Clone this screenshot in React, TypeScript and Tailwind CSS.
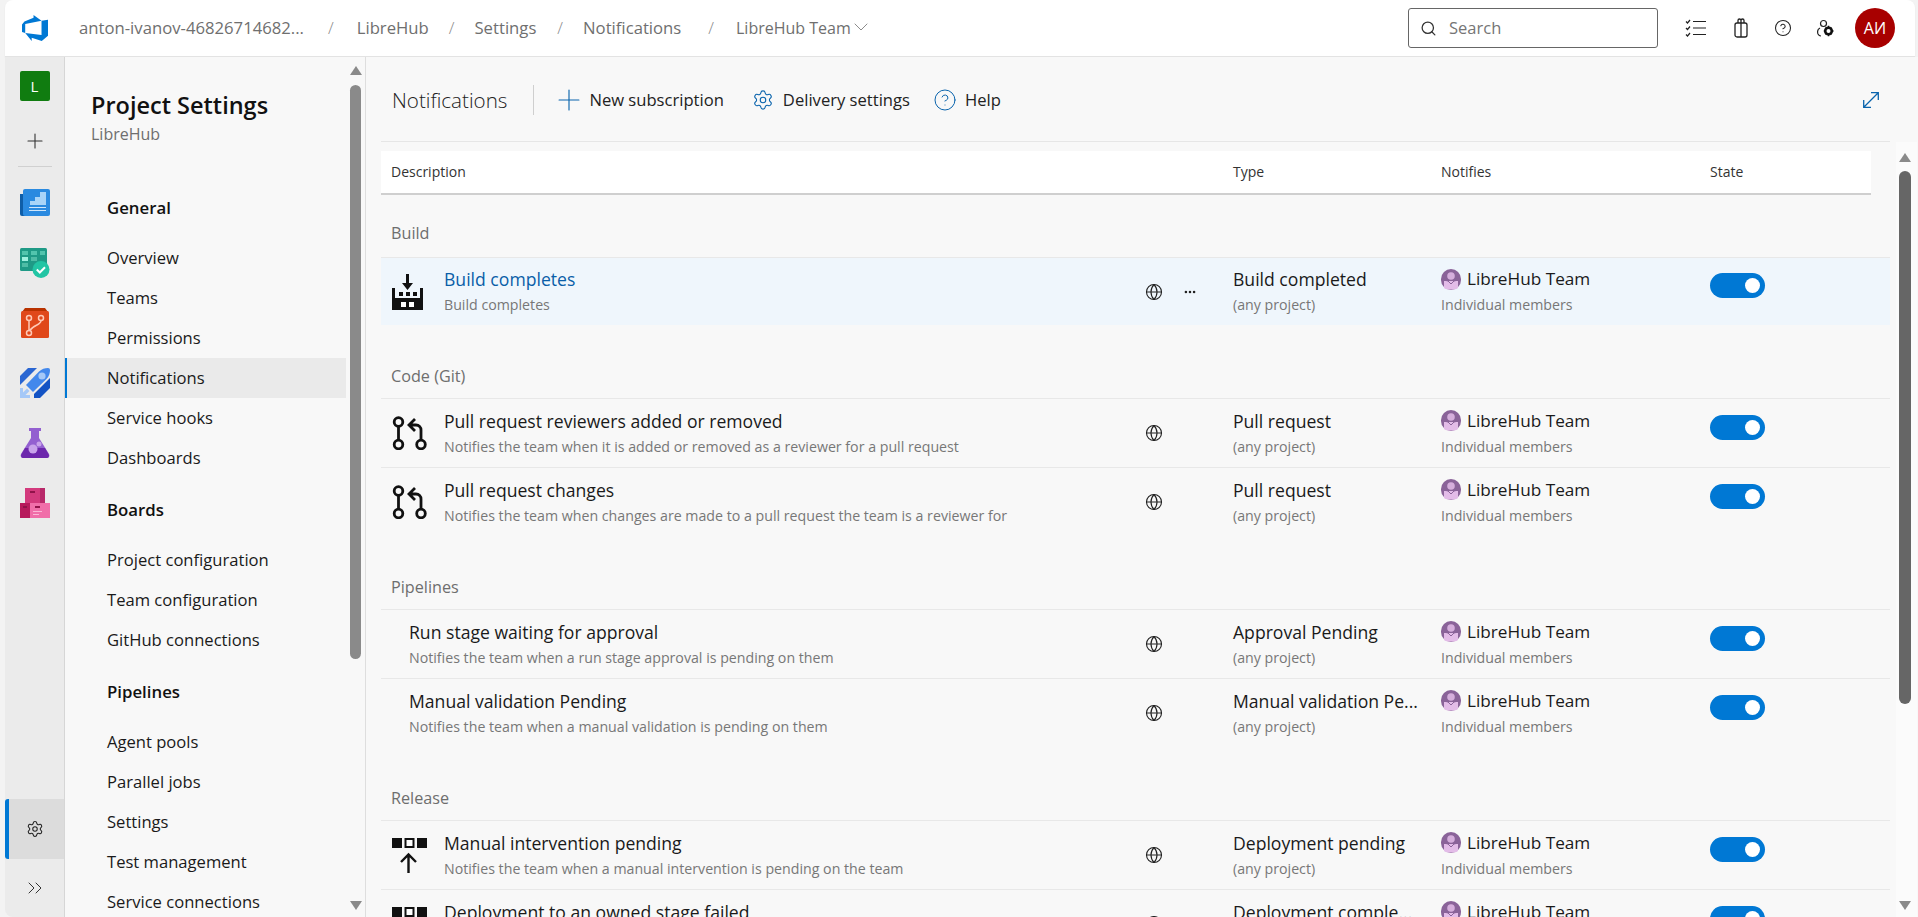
import { ChevronDown, ChevronsRight, CircleHelp, Ellipsis, Globe, Plus, Search, Settings } from "lucide-react";

const navSections = [
  { title: "General", items: ["Overview", "Teams", "Permissions", "Notifications", "Service hooks", "Dashboards"] },
  { title: "Boards", items: ["Project configuration", "Team configuration", "GitHub connections"] },
  { title: "Pipelines", items: ["Agent pools", "Parallel jobs", "Settings", "Test management", "Service connections"] },
];

type Row = { icon?: "build" | "pr" | "release"; title: string; sub: string; type: string; active?: boolean };

const groups: { label: string; rows: Row[] }[] = [
  {
    label: "Code (Git)",
    rows: [
      { icon: "pr", title: "Pull request reviewers added or removed", sub: "Notifies the team when it is added or removed as a reviewer for a pull request", type: "Pull request" },
      { icon: "pr", title: "Pull request changes", sub: "Notifies the team when changes are made to a pull request the team is a reviewer for", type: "Pull request" },
    ],
  },
  {
    label: "Pipelines",
    rows: [
      { title: "Run stage waiting for approval", sub: "Notifies the team when a run stage approval is pending on them", type: "Approval Pending" },
      { title: "Manual validation Pending", sub: "Notifies the team when a manual validation is pending on them", type: "Manual validation Pe..." },
    ],
  },
  {
    label: "Release",
    rows: [
      { icon: "release", title: "Manual intervention pending", sub: "Notifies the team when a manual intervention is pending on the team", type: "Deployment pending" },
      { icon: "release", title: "Deployment to an owned stage failed", sub: "Notifies the team when a deployment to an owned stage fails", type: "Deployment comple..." },
    ],
  },
];

const AzureLogo = () => (
  <svg width="26" height="26" viewBox="0 0 24 24" fill="#0078d4">
    <path d="M0 8.877L2.247 5.91l8.405-3.416V.022l7.37 5.393L2.966 8.338v8.225L0 15.707zm24-4.45v14.651l-5.753 4.9-9.303-3.057v3.056l-5.978-7.416 15.057 1.798V5.415z" />
  </svg>
);

const BoardsOverviewIcon = () => (
  <svg width="30" height="30" viewBox="0 0 30 30">
    <path d="M0 6h5v22H2a2 2 0 0 1-2-2z" fill="#0f5ea8" />
    <rect x="3" y="1" width="27" height="27" rx="2" fill="#2a8ae0" />
    <path d="M10 13h5V9h5V4h6v13H10z" fill="#a8d4f8" />
    <path d="M9 19h17v1H9zM9 22h17v1H9z" fill="#cfe6fb" />
  </svg>
);

const BoardsIcon = () => (
  <svg width="30" height="30" viewBox="0 0 30 30">
    <rect x="0" y="0" width="27" height="23" rx="1.500" fill="#1f9a86" />
    <path d="M2 3h6v4H2zM11 3h6v4h-6zM20 3h5v4h-5z" fill="#52c4ad" />
    <path d="M2 9h6v4H2z" fill="#9ff0df" />
    <path d="M11 9h6v4h-6zM2 15h6v4H2z" fill="#4fbca6" />
    <circle cx="21" cy="21.500" r="8.500" fill="#22c5a4" />
    <path d="M16.800 21.500l3 3 5.200-5.200" fill="none" stroke="#fff" strokeWidth="2" />
  </svg>
);

const ReposIcon = () => (
  <svg width="30" height="30" viewBox="0 0 30 30">
    <path d="M5 0h20l3 4H2z" fill="#b83200" />
    <rect x="1" y="3" width="28" height="27" rx="1.500" fill="#e0481a" />
    <g fill="none" stroke="#ffc9b5" strokeWidth="1.500">
      <circle cx="9" cy="10" r="2.500" />
      <circle cx="21" cy="10" r="2.500" />
      <circle cx="9" cy="25" r="2.500" />
      <path d="M9 12.500v10M21 12.500c0 5-8 4-11 10" />
    </g>
  </svg>
);

const PipelinesIcon = () => (
  <svg width="30" height="30" viewBox="0 0 30 30">
    <path d="M0 8L8 0h9L4 13l-4 4z" fill="#2a66d2" />
    <path d="M14 26L30 10v10L20 30h-6z" fill="#1353c4" />
    <path d="M6 17L19 3.500C21.500 1 25 0 28 0a2 2 0 0 1 2 2c0 3-1 6.500-3.500 9L13 24z" fill="#4388ec" />
    <circle cx="22" cy="8" r="3.600" fill="#a5c8f7" />
    <path d="M0 20h3v4.500l4-4 2.500 2.500-4 4H10v3H0z" fill="#a5c8f7" />
  </svg>
);

const TestIcon = () => (
  <svg width="30" height="30" viewBox="0 0 30 30">
    <path d="M9 0h12v3h-2v7l10 16c1 2 0 4-2 4H3c-2 0-3-2-2-4l10-16V3H9z" fill="#9360d0" />
    <path d="M5 20h20l4 7c0 2-1 3-2 3H3c-1 0-2-1-2-3z" fill="#6c27ac" />
    <circle cx="13" cy="21" r="4.500" fill="#c8a3ea" />
    <circle cx="19" cy="16" r="2.500" fill="#c8a3ea" />
  </svg>
);

const ArtifactsIcon = () => (
  <svg width="30" height="30" viewBox="0 0 30 30">
    <rect x="5" y="0" width="20" height="15" fill="#d33a7d" />
    <rect x="20" y="0" width="5" height="15" fill="#b8296a" />
    <rect x="0" y="15" width="15" height="15" fill="#b71a5c" />
    <rect x="10" y="15" width="20" height="15" fill="#f06ea9" />
    <path d="M10 3h5v2h-5zM15 18h5v2h-5zM3 18h4v2H3z" fill="#90134a" />
    <path d="M13 23h9v1h-9zM13 26h6v1h-6z" fill="#fbb7d6" />
  </svg>
);

const TeamAvatar = () => (
  <svg width="20" height="21" viewBox="0 0 20 21" className="shrink-0">
    <rect x="0" y="0" width="20" height="21" rx="10" fill="#8a6399" />
    <circle cx="10" cy="7" r="3.800" fill="#d5aedc" />
    <path d="M3 12h14v7c-2 2-12 2-14 0z" fill="#e3bce8" />
    <path d="M3 11l4 1 3 3 3-3 4-1" fill="none" stroke="#8a6399" strokeWidth="1" />
  </svg>
);

const BuildIcon = () => (
  <svg width="31" height="36" viewBox="0 0 31 36" className="shrink-0" fill="#111">
    <path d="M14 0h3v9h4l-5.500 7L10 9h4z" />
    <path d="M0 14h3v10h25V14h3v22H0z" />
    <path d="M7 18h4v4H7zM14 18h4v4h-4zM21 18h4v4h-4z" />
    <path d="M9 28h5v5H9zM17 28h5v5h-5z" fill="#fff" />
  </svg>
);

const PrIcon = () => (
  <svg width="35" height="34" viewBox="0 0 35 34" className="shrink-0" fill="none" stroke="#111" strokeWidth="2.800">
    <circle cx="6.500" cy="6" r="4.300" />
    <circle cx="6.500" cy="28.500" r="4.300" />
    <circle cx="29" cy="28.500" r="4.300" />
    <path d="M6.500 10.300v13.900M29 24.200V14c0-3-2-5-5-5h-7M23 3l-6 6 6 6" />
  </svg>
);

const ReleaseIcon = () => (
  <svg width="35" height="35" viewBox="0 0 35 35" className="shrink-0">
    <rect x="0" y="0" width="10" height="10" fill="#111" />
    <rect x="13.500" y="1" width="8" height="8" fill="#fff" stroke="#111" strokeWidth="2" />
    <rect x="25" y="0" width="10" height="10" fill="#111" />
    <path d="M16.500 35V17M9 24l7.500-7.500L24 24" fill="none" stroke="#111" strokeWidth="2.400" />
  </svg>
);

const ExpandIcon = () => (
  <svg width="16" height="16" viewBox="0 0 16 16" fill="none" stroke="#0a64ad" strokeWidth="1.300" className="ml-auto mr-[39px] shrink-0">
    <path d="M1 15L15 1M8 .7h7.300V8M.7 8v7.300H8" />
  </svg>
);

const TopIcons = () => (
  <div className="flex items-center">
    <svg width="22" height="18" viewBox="0 0 22 18" fill="none" stroke="#222" strokeWidth="1.200" className="ml-[27px]">
      <path d="M8 2.500h13M8 9h13M8 15.500h13" />
      <path d="M1 2.500l1.500 1.500L5 1M1 9l1.500 1.500L5 7.500M1 15.500L2.500 17 5 14" />
    </svg>
    <svg width="14" height="20" viewBox="0 0 14 20" fill="none" stroke="#222" strokeWidth="1.300" className="ml-[27px]">
      <rect x="1" y="5" width="12" height="14" rx="2" />
      <path d="M4 5V2.500a1.500 1.500 0 0 1 3 0V5M7 5V2.500a1.500 1.500 0 0 1 3 0V5M7 5v14" />
    </svg>
    <CircleHelp className="ml-[26px] h-[18px] w-[18px] text-[#222]" strokeWidth={1.400} />
    <svg width="17" height="19" viewBox="0 0 17 19" className="ml-[25px]">
      <circle cx="6.500" cy="4.500" r="3" fill="none" stroke="#222" strokeWidth="1.200" />
      <path d="M3 9c-2 1-3 3-2 6 .5 1 1.500 2 3 2" fill="none" stroke="#222" strokeWidth="1.200" />
      <circle cx="11.500" cy="12" r="3.300" fill="none" stroke="#111" strokeWidth="2.600" />
      <path d="M11.500 6.700v2M11.500 15.300v2M6.800 12h1.500M14.700 12h1.800M8.200 8.700l1 1M13.800 14.300l1 1M14.800 8.700l-1 1M9.200 14.300l-1 1" stroke="#111" strokeWidth="1.500" />
    </svg>
  </div>
);

const Slash = ({ className }: { className: string }) => <span className={"font-light text-[#8a8a8a] " + className}>/</span>;

const Header = () => (
  <header className="flex h-[57px] shrink-0 items-center rounded-t-[8px] border-b border-[#e3e3e3] bg-white pl-[17px] pr-[20px] shadow-[0_1px_2px_rgba(0,0,0,0.05)]">
    <AzureLogo />
    <nav className="ml-[31px] flex items-center whitespace-nowrap text-[16.700px] text-[#6f6f6f]">
      <span>anton-ivanov-46826714682...</span>
      <Slash className="ml-[24px]" />
      <span className="ml-[23px]">LibreHub</span>
      <Slash className="ml-[20px]" />
      <span className="ml-[20px]">Settings</span>
      <Slash className="ml-[21px]" />
      <span className="ml-[20px]">Notifications</span>
      <Slash className="ml-[27px]" />
      <span className="ml-[22px] flex items-center text-[16px]">
        LibreHub Team
        <ChevronDown className="-mt-[2px] -ml-[2px] h-[24px] w-[24px]" strokeWidth={0.800} />
      </span>
    </nav>
    <div className="ml-auto flex h-[40px] w-[250px] items-center rounded-[3px] border border-[#666] pl-[11px]">
      <Search className="h-[17px] w-[17px] text-[#333]" strokeWidth={1.800} />
      <span className="ml-[12px] text-[16.500px] text-[#757575]">Search</span>
    </div>
    <TopIcons />
    <div className="ml-[21px] flex h-[40px] w-[40px] items-center justify-center rounded-full bg-[#a80000] text-[16px] text-white">АИ</div>
  </header>
);

const Rail = () => (
  <aside className="flex w-[60px] shrink-0 flex-col items-center rounded-bl-[8px] border-r border-[#d6d6d6] bg-[#ebebeb]">
    <div className="mt-[14px] flex h-[30px] w-[30px] items-center justify-center rounded-[2px] bg-[#107c10] text-[15px] text-white">L</div>
    <Plus className="mt-[28px] h-[24px] w-[24px] text-[#333]" strokeWidth={1.100} />
    <div className="mt-[13px] h-px w-[34px] bg-[#d0d0d0]" />
    <div className="mt-[21px] flex flex-col gap-[30px]">
      <BoardsOverviewIcon />
      <BoardsIcon />
      <ReposIcon />
      <PipelinesIcon />
      <TestIcon />
      <ArtifactsIcon />
    </div>
    <div className="mt-auto flex h-[60px] w-full items-center justify-center rounded-l-[3px] border-l-4 border-[#0078d4] bg-[#dcdcdc] pr-[4px]">
      <Settings className="h-[18px] w-[18px] text-[#222]" strokeWidth={1.400} />
    </div>
    <div className="flex h-[58px] w-full items-center justify-center">
      <ChevronsRight className="h-[24px] w-[24px] text-[#333]" strokeWidth={1} />
    </div>
  </aside>
);

const Sidebar = () => (
  <aside className="flex w-[301px] shrink-0 border-r border-[#dedede] bg-[#f8f8f8]">
    <div className="w-[281px] shrink-0 overflow-hidden">
      <div className="px-[26px] pt-[32px]">
        <h1 className="text-[23.500px] leading-[32px] font-semibold text-[#111]">Project Settings</h1>
        <p className="mt-[2px] text-[16px] leading-[22px] text-[#6e6e6e]">LibreHub</p>
      </div>
      <div className="mt-[31px]">
        {navSections.map((s) => (
          <div key={s.title}>
            <div className="flex h-[62px] items-center pl-[42px] pt-[2px] text-[16.800px] font-semibold text-[#111]">{s.title}</div>
            {s.items.map((item) => (
              <div
                key={item}
                className={
                  item === "Notifications"
                    ? "flex h-[40px] items-center border-l-2 border-[#0078d4] bg-[#eaeaea] pl-[40px] text-[16.600px] text-[#1a1a1a]"
                    : "flex h-[40px] items-center pl-[42px] text-[16.600px] text-[#1a1a1a]"
                }
              >
                {item}
              </div>
            ))}
          </div>
        ))}
      </div>
    </div>
    <div className="flex w-[19px] flex-col items-center">
      <div className="mt-[9px] h-0 w-0 border-x-[6px] border-b-[9px] border-x-transparent border-b-[#8a8a8a]" />
      <div className="mt-[10px] h-[574px] w-[11px] rounded-full bg-[#8a8a8a]" />
      <div className="mt-auto mb-[7px] h-0 w-0 border-x-[6px] border-t-[9px] border-x-transparent border-t-[#8a8a8a]" />
    </div>
  </aside>
);

const Toolbar = () => (
  <div className="flex h-[84px] shrink-0 items-center pl-[26px] pt-[2px]">
    <span className="text-[20.600px] font-light text-[#222]">Notifications</span>
    <div className="ml-[26px] h-[30px] w-px bg-[#cfcfcf]" />
    <Plus className="ml-[18px] h-[34px] w-[34px] text-[#0a64ad]" strokeWidth={0.800} />
    <span className="ml-[3px] text-[16.600px] text-[#222]">New subscription</span>
    <Settings className="ml-[28px] h-[22px] w-[22px] text-[#0a64ad]" strokeWidth={1.200} />
    <span className="ml-[9px] text-[16.600px] text-[#222]">Delivery settings</span>
    <CircleHelp className="ml-[23px] h-[24px] w-[24px] text-[#0a64ad]" strokeWidth={1} />
    <span className="ml-[8px] text-[16.600px] text-[#222]">Help</span>
    <ExpandIcon />
  </div>
);

const TableHead = () => (
  <div className="mt-[9px] grid h-[44px] w-[1490px] grid-cols-[852px_208px_269px_1fr] items-center border-b-2 border-[#cfcfcf] bg-white pb-[1px] text-[14px] text-[#333]">
    <span className="pl-[10px]">Description</span>
    <span>Type</span>
    <span>Notifies</span>
    <span>State</span>
  </div>
);

const RowIcon = ({ icon }: { icon: Row["icon"] }) => {
  if (icon === "build") return <BuildIcon />;
  if (icon === "pr") return <PrIcon />;
  return <ReleaseIcon />;
};

const NotificationRow = ({ row, compact }: { row: Row; compact?: boolean }) => (
  <div
    className={
      (compact ? "h-[68px] " : "h-[69px] ") +
      (row.active ? "bg-[#eff6fc] " : "") +
      "grid grid-cols-[852px_208px_269px_1fr] items-center border-t border-[#e8e8e8]"
    }
  >
    <div className={row.icon ? "flex items-center pl-[11px]" : "flex items-center pl-[28px]"}>
      {row.icon && (
        <div className="flex w-[52px] shrink-0 items-center">
          <RowIcon icon={row.icon} />
        </div>
      )}
      <div className="flex min-w-0 flex-1 flex-col">
        <span className={row.active ? "text-[17.600px] leading-[26px] text-[#0a5ea8]" : "text-[17.600px] leading-[26px] text-[#1a1a1a]"}>{row.title}</span>
        <span className="text-[14.200px] leading-[25px] text-[#777]">{row.sub}</span>
      </div>
      <div className="flex w-[36px] shrink-0 justify-center">
        <Globe className="h-[18px] w-[18px] text-[#222]" strokeWidth={1.500} />
      </div>
      <div className="flex w-[36px] shrink-0 justify-center">
        {row.active && <Ellipsis className="h-[14px] w-[14px] text-[#222]" strokeWidth={2.400} />}
      </div>
      <div className="w-[25px] shrink-0" />
    </div>
    <div className="flex flex-col">
      <span className="text-[17.600px] leading-[26px] whitespace-nowrap text-[#1a1a1a]">{row.type}</span>
      <span className="text-[14.200px] leading-[25px] text-[#777]">(any project)</span>
    </div>
    <div className="flex flex-col">
      <span className="flex items-center gap-[6px] text-[17.200px] leading-[26px] text-[#1a1a1a]">
        <TeamAvatar />
        LibreHub Team
      </span>
      <span className="text-[14.200px] leading-[25px] text-[#777]">Individual members</span>
    </div>
    <div className="mb-[12px] flex h-[25px] w-[55px] items-center justify-end rounded-full bg-[#0078d4] pr-[5px]">
      <span className="h-[15px] w-[15px] rounded-full bg-white" />
    </div>
  </div>
);

const GroupLabel = ({ label, first }: { label: string; first?: boolean }) => (
  <div className={first ? "flex h-[62px] items-end pb-[14px] pl-[10px] text-[16.200px] leading-[20px] text-[#6e6e6e]" : "flex h-[73px] items-end pb-[12px] pl-[10px] text-[16.200px] leading-[20px] text-[#6e6e6e]"}>
    {label}
  </div>
);

const Main = () => (
  <main className="flex min-w-0 flex-1 flex-col overflow-hidden bg-[#f8f8f8]">
    <Toolbar />
    <div className="ml-[15px] h-px w-[1509px] shrink-0 bg-[#e6e6e6]" />
    <div className="flex min-h-0 flex-1">
      <div className="ml-[15px] w-[1509px] shrink-0 overflow-hidden">
        <TableHead />
        <GroupLabel label="Build" first />
        <NotificationRow compact row={{ icon: "build", title: "Build completes", sub: "Build completes", type: "Build completed", active: true }} />
        {groups.map((g) => (
          <div key={g.label}>
            <GroupLabel label={g.label} />
            {g.rows.map((r) => (
              <NotificationRow key={r.title} row={r} />
            ))}
          </div>
        ))}
      </div>
      <div className="ml-[6px] flex w-[21px] shrink-0 flex-col items-center bg-[#fbfbfb] pr-[3px]">
        <div className="mt-[11px] h-0 w-0 border-x-[6px] border-b-[9px] border-x-transparent border-b-[#8a8a8a]" />
        <div className="mt-[9px] h-[533px] w-[12px] rounded-full bg-[#666]" />
        <div className="mt-auto mb-[7px] h-0 w-0 border-x-[6px] border-t-[9px] border-x-transparent border-t-[#8a8a8a]" />
      </div>
    </div>
  </main>
);

export default function App() {
  return (
    <div className="flex h-screen w-full flex-col overflow-hidden bg-[#f3f3f3] pl-[5px] font-['Open_Sans',sans-serif]">
      <div className="mr-[3px]">
        <Header />
      </div>
      <div className="flex min-h-0 flex-1">
        <Rail />
        <Sidebar />
        <Main />
      </div>
    </div>
  );
}
